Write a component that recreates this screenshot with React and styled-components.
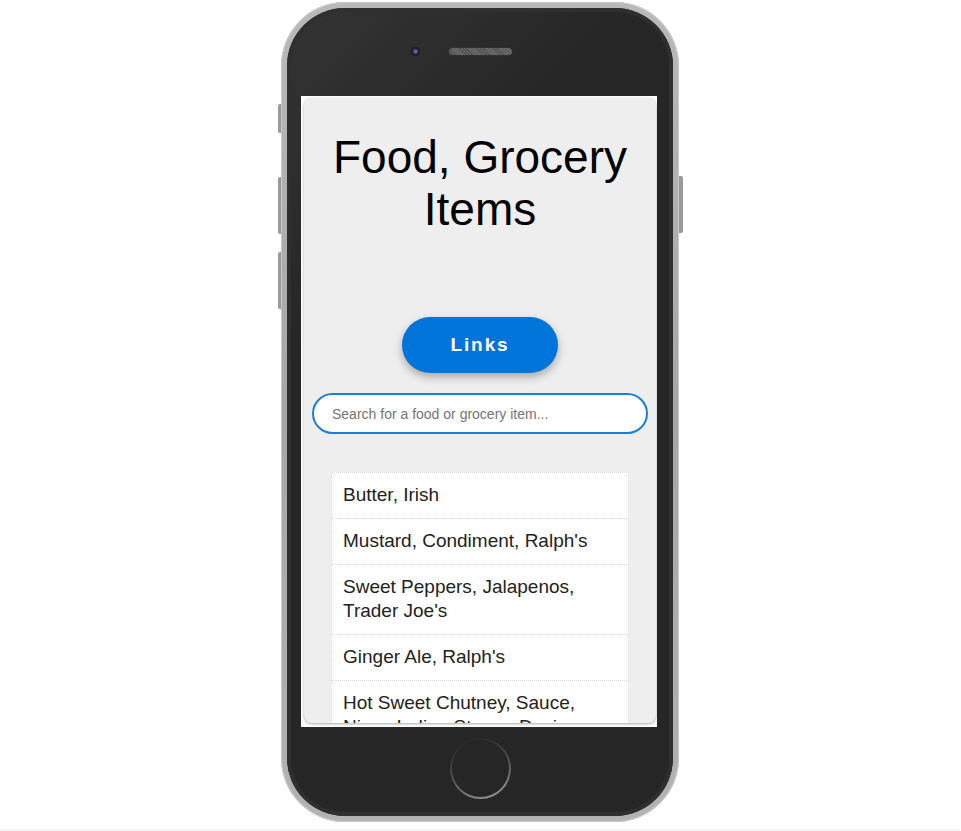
import React from 'react'
import styled, { createGlobalStyle } from 'styled-components'

const items = [
  "Butter, Irish",
  "Mustard, Condiment, Ralph's",
  "Sweet Peppers, Jalapenos, Trader Joe's",
  "Ginger Ale, Ralph's",
  "Hot Sweet Chutney, Sauce, Nirav, Indian Stores, Desi",
  "Rice, Basmati, Costco",
  "Yogurt, Greek, Trader Joe's",
]

const App = () => (
  <Page>
    <GlobalStyle />
    <Device>
      <SideButton side="left" top={102} height={29} />
      <SideButton side="left" top={175} height={57} />
      <SideButton side="left" top={250} height={57} />
      <SideButton side="right" top={174} height={57} />
      <Frame>
        <TopBezel>
          <Camera />
          <Speaker />
        </TopBezel>
        <Screen>
          <AppPanel>
            <Title>Food, Grocery Items</Title>
            <LinksButton>Links</LinksButton>
            <SearchInput placeholder="Search for a food or grocery item..." />
            <List>
              {items.map((item) => (
                <ListItem key={item}>{item}</ListItem>
              ))}
            </List>
          </AppPanel>
        </Screen>
        <BottomBezel>
          <HomeButton>
            <HomeInner />
          </HomeButton>
        </BottomBezel>
      </Frame>
    </Device>
    <FooterStrip />
  </Page>
)

export default App

const GlobalStyle = createGlobalStyle`
  html, body {
    margin: 0;
    padding: 0;
    background: #fff;
    font-family: "Liberation Sans", Arial, sans-serif;
  }
`

const Page = styled.div`
  display: flex;
  flex-direction: column;
  align-items: center;
  padding-top: 2px;
  width: 960px;
  height: 829px;
  overflow: hidden;
`

const Device = styled.div`
  position: relative;
  flex-shrink: 0;
  box-sizing: border-box;
  width: 398px;
  height: 820px;
  padding: 6px;
  border-radius: 64px;
  background: linear-gradient(180deg, #b9b9b9 0%, #a6a6a6 50%, #b2b2b2 100%);
  box-shadow: inset 0 0 0 1px #c9c9c9;
`

const SideButton = styled.div`
  position: absolute;
  top: ${(p) => p.top}px;
  ${(p) => (p.side === 'left' ? 'left: -3px;' : 'right: -4px;')}
  width: ${(p) => (p.side === 'left' ? 3 : 4)}px;
  height: ${(p) => p.height}px;
  background: #9a9a9a;
  border-radius: ${(p) => (p.side === 'left' ? '2px 0 0 2px' : '0 2px 2px 0')};
`

const Frame = styled.div`
  display: flex;
  flex-direction: column;
  align-items: center;
  height: 100%;
  border-radius: 58px;
  background: linear-gradient(135deg, #343434 0%, #262626 30%, #262626 100%);
  box-shadow: inset 0 0 0 4px #2f2f2f;
`

const TopBezel = styled.div`
  display: grid;
  grid-template-columns: 1fr auto 1fr;
  align-items: center;
  align-content: start;
  flex-shrink: 0;
  width: 100%;
  height: 88px;
  box-sizing: border-box;
  padding-top: 39px;
`

const Camera = styled.div`
  justify-self: end;
  margin-right: 29px;
  width: 9px;
  height: 9px;
  border-radius: 50%;
  background: radial-gradient(circle, #6a5aa8 0 1.5px, #2b2545 2.5px, #1a1a1f 4px);
  box-shadow: 0 0 0 1px #2e2e2e;
`

const Speaker = styled.div`
  width: 63px;
  height: 7px;
  border-radius: 4px;
  background: repeating-linear-gradient(45deg, #505050 0 1px, #6e6e6e 1px 2px);
  box-shadow: 0 0 0 1px #303030;
`

const Screen = styled.div`
  box-sizing: border-box;
  flex-shrink: 0;
  width: 356px;
  height: 631px;
  margin-right: 2px;
  padding: 2px 1px 4px 3px;
  background: #fff;
`

const AppPanel = styled.div`
  display: flex;
  flex-direction: column;
  align-items: center;
  height: 100%;
  overflow: hidden;
  border-radius: 8px;
  background: #eeeeee;
  box-shadow: 0 1px 3px rgba(0, 0, 0, 0.35);
`

const Title = styled.h1`
  margin: 33px 0 82px;
  font-size: 46px;
  font-weight: 400;
  line-height: 52px;
  color: #000;
  text-align: center;
`

const LinksButton = styled.button`
  width: 156px;
  height: 56px;
  flex-shrink: 0;
  border: none;
  border-radius: 28px;
  background: #0074d9;
  color: #fff;
  font-family: "Liberation Sans", Arial, sans-serif;
  font-size: 19px;
  font-weight: 700;
  letter-spacing: 1.9px;
  box-shadow: 0 4px 8px rgba(0, 0, 0, 0.3);
  cursor: pointer;
`

const SearchInput = styled.input`
  box-sizing: border-box;
  flex-shrink: 0;
  width: 336px;
  height: 41px;
  margin: 20px 0 38px;
  padding: 0 18px;
  border: 2px solid #1c7ed6;
  border-radius: 21px;
  background: #fff;
  font-family: "Liberation Sans", Arial, sans-serif;
  font-size: 14px;
  color: #222;
  outline: none;

  &::placeholder {
    color: #757575;
  }
`

const List = styled.ul`
  flex-shrink: 0;
  width: 298px;
  margin: 0;
  padding: 0;
  list-style: none;
  background: #fff;
`

const ListItem = styled.li`
  padding: 10px 11px 11px;
  border: 1px dotted #dcdcdc;
  border-top-width: 0;
  font-size: 19px;
  line-height: 24px;
  color: #222;

  &:first-child {
    border-top-width: 1px;
  }
`

const BottomBezel = styled.div`
  display: flex;
  justify-content: center;
  align-items: flex-start;
  padding-top: 11px;
`

const HomeButton = styled.div`
  box-sizing: border-box;
  width: 61px;
  height: 61px;
  padding: 2px;
  border-radius: 50%;
  background: linear-gradient(160deg, #2a2a2a 15%, #555 55%, #9a9a9a 95%);
`

const HomeInner = styled.div`
  width: 100%;
  height: 100%;
  border-radius: 50%;
  background: #262626;
`

const FooterStrip = styled.div`
  flex-shrink: 0;
  align-self: stretch;
  height: 2px;
  margin-top: 7px;
  background: #f5f5f5;
`
